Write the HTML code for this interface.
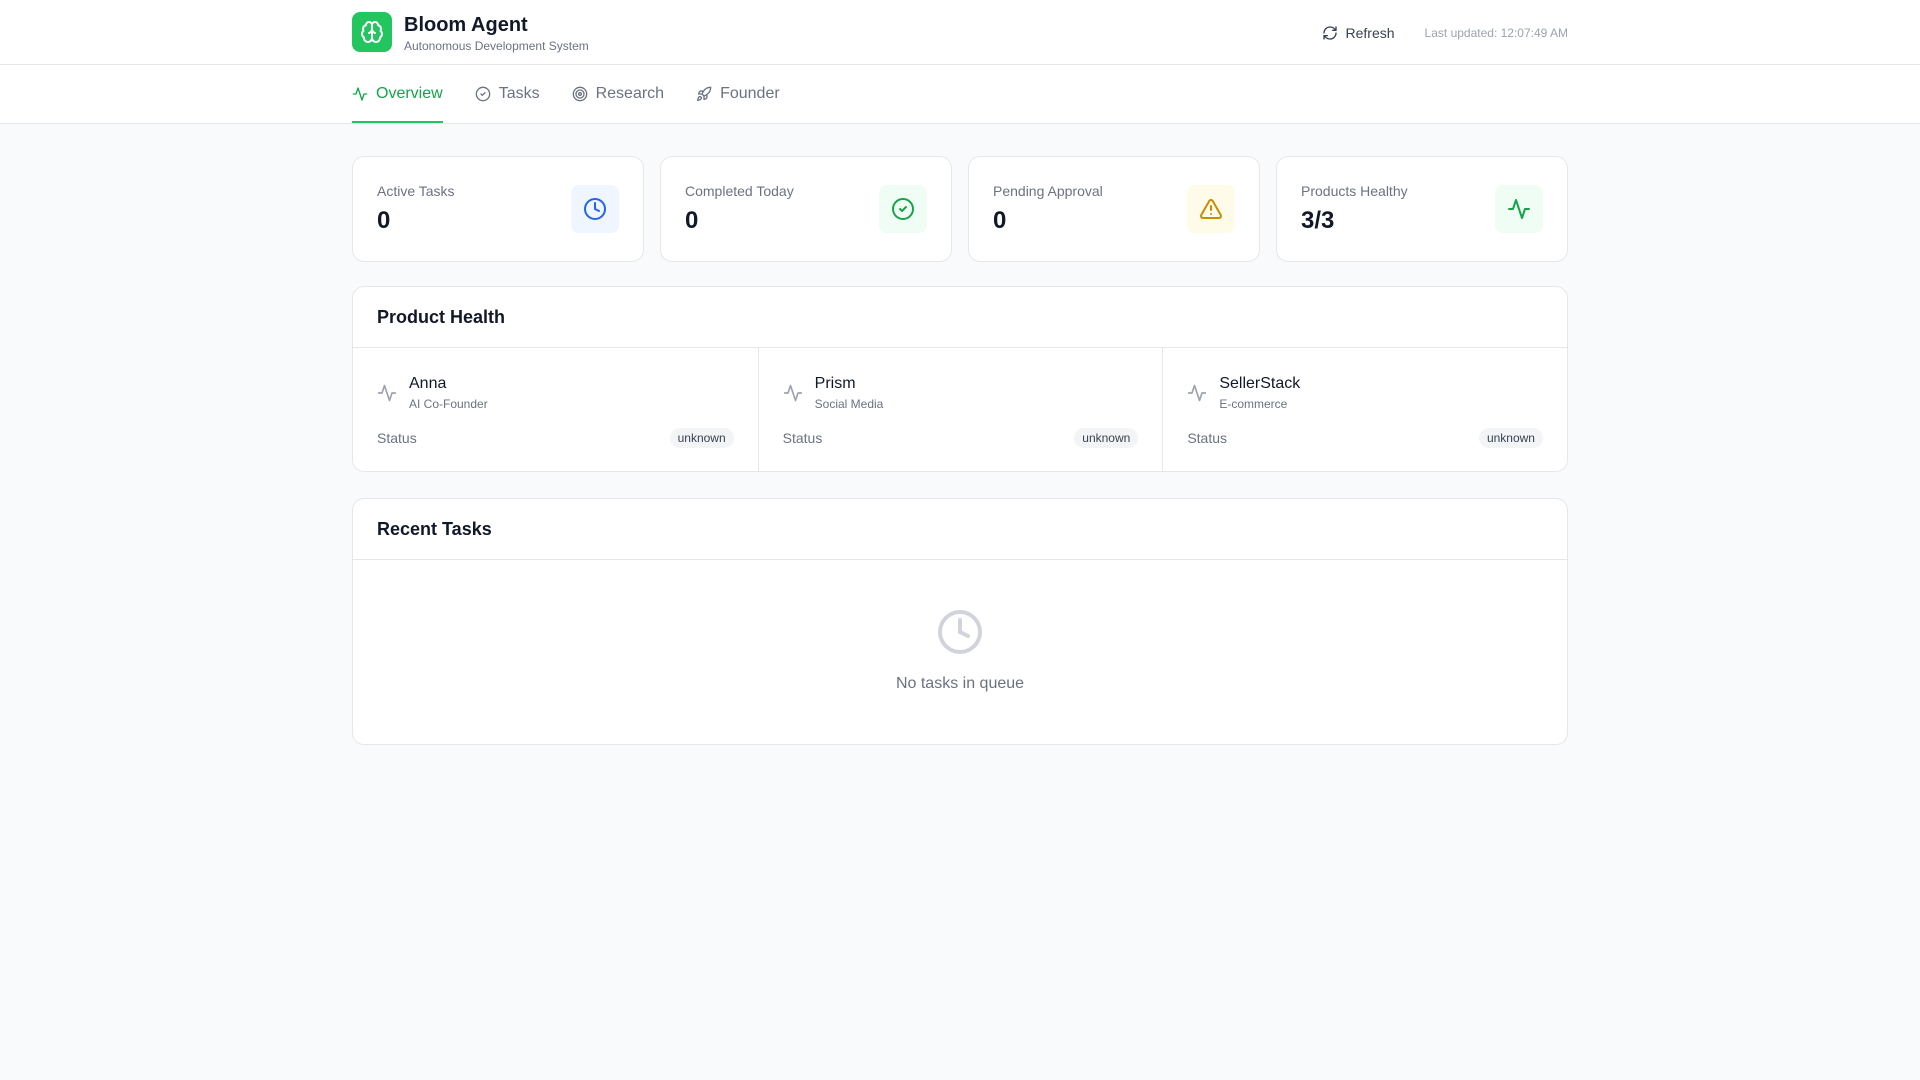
<!DOCTYPE html>
<html><head><meta charset="utf-8"><style>
*{box-sizing:border-box;margin:0;padding:0}
body{width:1920px;height:1080px;background:#f9fafb;font-family:"Liberation Sans",sans-serif;color:#111827}
.wrap{width:1216px;margin:0 auto}
header{background:#fff;border-bottom:1px solid #e5e7eb;height:65px}
header .wrap{display:flex;align-items:center;height:64px;justify-content:space-between}
.logo{width:40px;height:40px;border-radius:8px;background:#22c55e;display:flex;align-items:center;justify-content:center;margin-right:12px}
.brand{display:flex;align-items:center}
.t1{font-size:20px;font-weight:bold;line-height:24px;margin-top:3px}
.t2{font-size:12px;color:#6b7280;line-height:16px;margin-top:1px}
.right{display:flex;align-items:center;font-size:14px;color:#374151;margin-top:1px}
.right .ref{display:flex;align-items:center;gap:8px;margin-right:30px}
.right .lu{font-size:12px;color:#9ca3af}
nav{background:#fff;border-bottom:1px solid #e5e7eb;height:59px}
nav .wrap{display:flex;height:58px;gap:32px}
.tab{display:flex;align-items:center;gap:8px;font-size:16px;color:#6b7280;height:58px;border-bottom:2px solid transparent;padding-top:2px}
.tab.a{color:#16a34a;border-bottom-color:#22c55e}
main{padding-top:32px}
.stats{display:grid;grid-template-columns:repeat(4,1fr);gap:16px}
.card{background:#fff;border:1px solid #e5e7eb;border-radius:12px}
.stat{height:106px;padding:0 24px;display:flex;align-items:center;justify-content:space-between}
.lbl{font-size:14px;color:#6b7280;line-height:20px}
.val{font-size:24px;font-weight:bold;line-height:32px;margin-top:4px}
.ib{width:48px;height:48px;border-radius:8px;display:flex;align-items:center;justify-content:center}
.sec{margin-top:24px}
.sec2{margin-top:26px}
.sh{height:61px;border-bottom:1px solid #e5e7eb;padding:0 24px;display:flex;align-items:center;font-size:18px;font-weight:bold}
.grid3{display:grid;grid-template-columns:repeat(3,1fr)}
.cell{padding:25px 24px 23px;height:123px}
.cell+.cell{border-left:1px solid #e5e7eb}
.nm{display:flex;gap:12px;align-items:center}
.n1{font-size:16px;line-height:22px}
.n2{font-size:12px;color:#6b7280;line-height:16px;margin-top:1px}
.st{display:flex;justify-content:space-between;align-items:center;margin-top:16px;font-size:14px;color:#6b7280}
.bd{font-size:12px;background:#f3f4f6;color:#374151;border-radius:999px;padding:3px 8px}
.empty{height:184px;display:flex;flex-direction:column;align-items:center;padding-top:48px}
.empty p{font-size:16px;color:#6b7280;margin-top:19px}
</style></head><body>
<header><div class="wrap">
<div class="brand"><div class="logo"><svg width="24" height="24" viewBox="0 0 24 24" fill="none" stroke="#fff" stroke-width="2" stroke-linecap="round" stroke-linejoin="round"><path d="M12 5a3 3 0 1 0-5.997.125 4 4 0 0 0-2.526 5.77 4 4 0 0 0 .556 6.588A4 4 0 1 0 12 18Z"/><path d="M12 5a3 3 0 1 1 5.997.125 4 4 0 0 1 2.526 5.77 4 4 0 0 1-.556 6.588A4 4 0 1 1 12 18Z"/><path d="M15 13a4.5 4.5 0 0 1-3-4 4.5 4.5 0 0 1-3 4"/><path d="M12 18V5"/></svg></div>
<div><div class="t1">Bloom Agent</div><div class="t2">Autonomous Development System</div></div></div>
<div class="right"><div class="ref"><svg width="16" height="16" viewBox="0 0 24 24" fill="none" stroke="#374151" stroke-width="2" stroke-linecap="round" stroke-linejoin="round"><path d="M3 12a9 9 0 0 1 9-9 9.75 9.75 0 0 1 6.74 2.74L21 8"/><path d="M21 3v5h-5"/><path d="M21 12a9 9 0 0 1-9 9 9.75 9.75 0 0 1-6.74-2.740L3 16"/><path d="M8 16H3v5"/></svg>Refresh</div><div class="lu">Last updated: 12:07:49 AM</div></div>
</div></header>
<nav><div class="wrap">
<div class="tab a"><svg width="16" height="16" viewBox="0 0 24 24" fill="none" stroke="currentColor" stroke-width="2" stroke-linecap="round" stroke-linejoin="round"><path d="M22 12h-4l-3 9L9 3l-3 9H2"/></svg>Overview</div>
<div class="tab"><svg width="16" height="16" viewBox="0 0 24 24" fill="none" stroke="currentColor" stroke-width="2" stroke-linecap="round" stroke-linejoin="round"><circle cx="12" cy="12" r="10"/><path d="m9 12 2 2 4-4"/></svg>Tasks</div>
<div class="tab"><svg width="16" height="16" viewBox="0 0 24 24" fill="none" stroke="currentColor" stroke-width="2"><circle cx="12" cy="12" r="10"/><circle cx="12" cy="12" r="6"/><circle cx="12" cy="12" r="2"/></svg>Research</div>
<div class="tab"><svg width="16" height="16" viewBox="0 0 24 24" fill="none" stroke="currentColor" stroke-width="2" stroke-linecap="round" stroke-linejoin="round"><path d="M4.5 16.5c-1.5 1.26-2 5-2 5s3.74-.5 5-2c.71-.84.7-2.13-.09-2.91a2.18 2.18 0 0 0-2.91-.09z"/><path d="m12 15-3-3a22 22 0 0 1 2-3.95A12.88 12.88 0 0 1 22 2c0 2.72-.78 7.5-6 11a22.35 22.35 0 0 1-4 2z"/><path d="M9 12H4s.55-3.03 2-4c1.62-1.08 5 0 5 0"/><path d="M12 15v5s3.03-.55 4-2c1.08-1.62 0-5 0-5"/></svg>Founder</div>
</div></nav>
<main class="wrap">
<div class="stats">
<div class="card stat"><div><div class="lbl">Active Tasks</div><div class="val">0</div></div><div class="ib" style="background:#eff6ff"><svg width="24" height="24" viewBox="0 0 24 24" fill="none" stroke="#2563eb" stroke-width="2" stroke-linecap="round"><circle cx="12" cy="12" r="10"/><path d="M12 6v6l4 2"/></svg></div></div>
<div class="card stat"><div><div class="lbl">Completed Today</div><div class="val">0</div></div><div class="ib" style="background:#f0fdf4"><svg width="24" height="24" viewBox="0 0 24 24" fill="none" stroke="#16a34a" stroke-width="2" stroke-linecap="round" stroke-linejoin="round"><circle cx="12" cy="12" r="10"/><path d="m9 12 2 2 4-4"/></svg></div></div>
<div class="card stat"><div><div class="lbl">Pending Approval</div><div class="val">0</div></div><div class="ib" style="background:#fefce8"><svg width="24" height="24" viewBox="0 0 24 24" fill="none" stroke="#ca8a04" stroke-width="2" stroke-linecap="round" stroke-linejoin="round"><path d="m21.73 18-8-14a2 2 0 0 0-3.48 0l-8 14A2 2 0 0 0 4 21h16a2 2 0 0 0 1.73-3"/><path d="M12 9v4"/><path d="M12 17h.01"/></svg></div></div>
<div class="card stat"><div><div class="lbl">Products Healthy</div><div class="val">3/3</div></div><div class="ib" style="background:#f0fdf4"><svg width="24" height="24" viewBox="0 0 24 24" fill="none" stroke="#16a34a" stroke-width="2" stroke-linecap="round" stroke-linejoin="round"><path d="M22 12h-4l-3 9L9 3l-3 9H2"/></svg></div></div>
</div>
<div class="card sec"><div class="sh">Product Health</div>
<div class="grid3">
<div class="cell"><div class="nm"><svg width="20" height="20" viewBox="0 0 24 24" fill="none" stroke="#9ca3af" stroke-width="2" stroke-linecap="round" stroke-linejoin="round"><path d="M22 12h-4l-3 9L9 3l-3 9H2"/></svg><div><div class="n1">Anna</div><div class="n2">AI Co-Founder</div></div></div><div class="st">Status<span class="bd">unknown</span></div></div>
<div class="cell"><div class="nm"><svg width="20" height="20" viewBox="0 0 24 24" fill="none" stroke="#9ca3af" stroke-width="2" stroke-linecap="round" stroke-linejoin="round"><path d="M22 12h-4l-3 9L9 3l-3 9H2"/></svg><div><div class="n1">Prism</div><div class="n2">Social Media</div></div></div><div class="st">Status<span class="bd">unknown</span></div></div>
<div class="cell"><div class="nm"><svg width="20" height="20" viewBox="0 0 24 24" fill="none" stroke="#9ca3af" stroke-width="2" stroke-linecap="round" stroke-linejoin="round"><path d="M22 12h-4l-3 9L9 3l-3 9H2"/></svg><div><div class="n1">SellerStack</div><div class="n2">E-commerce</div></div></div><div class="st">Status<span class="bd">unknown</span></div></div>
</div></div>
<div class="card sec2"><div class="sh">Recent Tasks</div>
<div class="empty"><svg width="48" height="48" viewBox="0 0 24 24" fill="none" stroke="#d1d5db" stroke-width="2" stroke-linecap="round"><circle cx="12" cy="12" r="10"/><path d="M12 6v6l4 2"/></svg><p>No tasks in queue</p></div></div>
</main>
</body></html>
